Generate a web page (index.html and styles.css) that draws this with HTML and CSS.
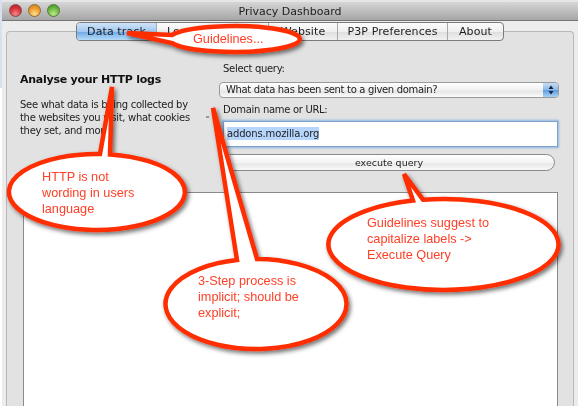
FILE: index.html
```html
<!DOCTYPE html>
<html lang="en">
<head>
<meta charset="utf-8">
<title>Privacy Dashboard</title>
<link rel="stylesheet" href="styles.css">
</head>
<body>
<div class="screen">
  <div class="window">
    <header class="titlebar">
      <div class="lights">
        <span class="light red"></span>
        <span class="light yellow"></span>
        <span class="light green"></span>
      </div>
      <div class="title">Privacy Dashboard</div>
    </header>
    <div class="content">
      <nav class="tabs">
        <span class="tab tab-active tab-data">Data track</span>
        <span class="tab tab-logs">Logs</span>
        <span class="tab tab-website">Website</span>
        <span class="tab tab-p3p">P3P Preferences</span>
        <span class="tab tab-about">About</span>
      </nav>
      <main class="panel">
        <div class="columns">
          <section class="intro">
            <h1>Analyse your HTTP logs</h1>
            <p>See what data is being collected by the websites you visit, what cookies they set, and more.</p>
          </section>
          <section class="form">
            <label class="label">Select query:</label>
            <div class="select">
              <span>What data has been sent to a given domain?</span>
              <span class="stepper">
                <svg width="8" height="12" viewBox="0 0 8 12"><path d="M4 1.5 6.5 5h-5zM4 10.5 1.5 7h5z" fill="#1c2433"/></svg>
              </span>
            </div>
            <label class="label label-domain">Domain name or URL:</label>
            <div class="input"><span class="selected">addons.mozilla.org</span></div>
            <button class="execute" type="button">execute query</button>
          </section>
        </div>
        <div class="log"></div>
      </main>
    </div>
  </div>

  <span class="tick"></span>
  <svg class="bubbles" width="578" height="406" viewBox="0 0 578 406" aria-hidden="true">
    <defs>
      <filter id="shadow" x="-15%" y="-15%" width="130%" height="130%">
        <feDropShadow dx="2" dy="2.5" stdDeviation="2" flood-color="#000" flood-opacity="0.55"/>
      </filter>
    </defs>
    <g fill="#fff" stroke="#ff2d00" stroke-width="4.5" stroke-linejoin="miter" filter="url(#shadow)">
      <path d="M127 33 L172 35 A65.5 13 0 1 1 172 43 Z"/>
      <path d="M112 87 L110 154.4 A88 38 0 1 1 100 154 Z"/>
      <path d="M213 108 L257 259 A90.5 45 0 1 1 237 260 Z"/>
      <path d="M404 174 L423 199.7 A115 45.5 0 1 1 413 200.6 Z"/>
    </g>
  </svg>
  <div class="note note-guidelines">Guidelines...</div>
  <div class="note note-http">HTTP is not<br>wording in users<br>language</div>
  <div class="note note-step">3-Step process is<br>implicit; should be<br>explicit;</div>
  <div class="note note-capitalize">Guidelines suggest to<br>capitalize labels -&gt;<br>Execute Query</div>
</div>
</body>
</html>
```
FILE: styles.css
```css
* { box-sizing: border-box; }
html, body { margin: 0; padding: 0; }
body { width: 578px; height: 406px; overflow: hidden; background: #fff; }

.screen {
  position: relative;
  width: 578px;
  height: 406px;
  overflow: hidden;
  padding-left: 2px;
  background: linear-gradient(#d6e0ee 88px, #fff 88px);
  filter: blur(0.35px);
}

.window {
  width: 576px;
  height: 406px;
  background: #ececec;
  font-family: "DejaVu Sans", sans-serif;
  color: #222;
}

.titlebar {
  position: relative;
  height: 21px;
  background: linear-gradient(#d6d6d6, #a6a6a6);
  border-top: 2px solid #e6e6e6;
  border-bottom: 1px solid #747474;
  display: flex;
  align-items: center;
  justify-content: center;
}
.lights { position: absolute; left: 7px; top: 2px; display: flex; gap: 6px; }
.light { width: 13px; height: 13px; border-radius: 50%; border: 1px solid #777; }
.red { background: radial-gradient(circle at 50% 80%, #f48a8a, #d8303a 55%, #a81c24); border-color: #8c4a4a; }
.yellow { background: radial-gradient(circle at 50% 80%, #fde08a, #ee9c2c 55%, #c87818); border-color: #8c6a3a; }
.green { background: radial-gradient(circle at 50% 80%, #bfe890, #6cb840 55%, #3f8c24); border-color: #4f7a3a; }
.title { font-size: 11px; color: #1e1e1e; }

.content { position: relative; height: 385px; padding: 10px 4px 0 4px; }

.tabs {
  position: absolute;
  left: 74px;
  top: 1px;
  z-index: 1;
  display: flex;
  height: 19px;
  border: 1px solid #7b7b7b;
  border-radius: 4px;
  overflow: hidden;
  background: linear-gradient(#fbfbfb, #f0f0f0 50%, #dedede 52%, #f2f2f2);
}
.tab {
  display: flex;
  align-items: center;
  justify-content: center;
  font-size: 11px;
  letter-spacing: 0.1px;
  color: #1e1e1e;
  border-left: 1px solid #a8a8a8;
}
.tab-active {
  border-left: 0;
  background: linear-gradient(#cfe3f8, #a2c8f0 50%, #6fa8e6 52%, #b5dcf8);
}
.tab-data { width: 79px; }
.tab-logs { width: 112px; justify-content: flex-start; padding-left: 10px; }
.tab-website { width: 69px; }
.tab-p3p { width: 110px; }
.tab-about { width: 56px; }

.panel {
  height: 100%;
  background: #e2e2e2;
  border: 1px solid #b8b8b8;
  border-bottom: 0;
  border-radius: 4px 4px 0 0;
  padding: 0 15px 0 16px;
}

.columns { display: flex; height: 160px; margin-right: -1px; }

.intro { width: 196px; padding-top: 41px; margin-left: -3px; flex: none; }
.intro h1 { margin: 0; font-size: 11px; line-height: 14px; font-weight: bold; color: #111; letter-spacing: -0.25px; }
.intro p { margin: 11px 0 0; width: 174px; font-size: 10px; line-height: 13px; letter-spacing: -0.3px; color: #222; }

.form { flex: 1; display: flex; flex-direction: column; align-items: stretch; padding-top: 30px; }
.label { display: block; font-size: 10px; line-height: 14px; letter-spacing: -0.3px; margin-left: 7px; color: #222; }

.select {
  margin: 6px 0 0 3px;
  height: 16px;
  display: flex;
  justify-content: space-between;
  align-items: stretch;
  border: 1px solid #9a9a9a;
  border-radius: 4px;
  background: linear-gradient(#fff, #f0f0f0 50%, #e6e6e6 60%, #fbfbfb);
  font-size: 10px;
  line-height: 14px;
  letter-spacing: -0.33px;
  overflow: hidden;
}
.select > span:first-child { padding-left: 6px; }
.stepper {
  width: 15px;
  display: flex;
  align-items: center;
  justify-content: center;
  background: linear-gradient(#c6dcf6, #8db8ea 50%, #5f9ce0 52%, #a6d2f6);
}

.label-domain { margin-top: 5px; }

.input {
  margin: 4px 1px 0 7px;
  height: 26px;
  background: #fff;
  border: 1px solid #7da2ce;
  box-shadow: 0 0 2px 1px #8db4e0;
  padding: 5px 0 0 3px;
  font-size: 10px;
  line-height: 14px;
  letter-spacing: -0.15px;
}
.selected { background: #b5d5fd; padding: 1px 0; }

.execute {
  margin: 7px 4px 0 7px;
  height: 17px;
  padding: 0;
  font: 9.5px "DejaVu Sans", sans-serif;
  color: #222;
  border: 1px solid #8a8a8a;
  border-radius: 9px;
  background: linear-gradient(#fff, #f3f3f3 50%, #e8e8e8 60%, #f8f8f8);
}

.log {
  height: 214px;
  background: #fff;
  border: 1px solid #8a8a8a;
  border-bottom: 0;
}

.tick { position: absolute; left: 206px; top: 116px; width: 3px; height: 2px; background: #9a9a9a; }

.bubbles { position: absolute; left: 0; top: 0; z-index: 2; }

.note {
  position: absolute;
  z-index: 3;
  font-family: "Liberation Sans", Arial, sans-serif;
  font-size: 12.7px;
  line-height: 16px;
  color: #ff4028;
  white-space: nowrap;
}
.note-guidelines { left: 193px; top: 31px; }
.note-http { left: 42px; top: 169px; }
.note-step { left: 198px; top: 273px; }
.note-capitalize { left: 367px; top: 215px; }
```
